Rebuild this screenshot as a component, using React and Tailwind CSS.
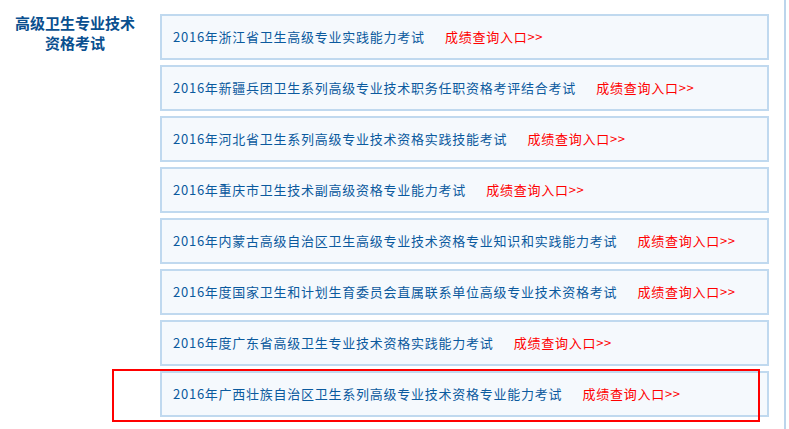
import React from "react";

const exams = [
  "2016年浙江省卫生高级专业实践能力考试",
  "2016年新疆兵团卫生系列高级专业技术职务任职资格考评结合考试",
  "2016年河北省卫生系列高级专业技术资格实践技能考试",
  "2016年重庆市卫生技术副高级资格专业能力考试",
  "2016年内蒙古高级自治区卫生高级专业技术资格专业知识和实践能力考试",
  "2016年度国家卫生和计划生育委员会直属联系单位高级专业技术资格考试",
  "2016年度广东省高级卫生专业技术资格实践能力考试",
  "2016年广西壮族自治区卫生系列高级专业技术资格专业能力考试",
];

const ExamRow = ({ title }) => (
  <div className="h-[46px] flex items-center pl-[11px] border-2 border-[#c0d9ef] bg-[#f5f9fd] tracking-[0.75px]">
    <span className="text-[#0b5a9e]">{title}</span>
    <a href="#" className="ml-[20px] text-[#ff0000]">
      成绩查询入口&gt;&gt;
    </a>
  </div>
);

export default function App() {
  return (
    <div
      className="relative flex w-[789px] h-[429px] bg-white text-[13px] leading-[16px]"
      style={{ fontFamily: '"Noto Sans CJK SC", "Noto Sans", sans-serif' }}
    >
      <div className="w-[150px] pt-[13px] text-center text-[15px] leading-[20px] font-bold text-[#0a4f8f]">
        高级卫生专业技术
        <br />
        资格考试
      </div>

      <div className="ml-[10px] w-[609px] pt-[14px] flex flex-col gap-[5px]">
        {exams.map((t) => (
          <ExamRow key={t} title={t} />
        ))}
      </div>

      <div className="ml-[15px] w-[2px] h-full bg-[#bcd5ec]" />

      <div className="absolute left-[112px] top-[369px] w-[648px] h-[53px] border-2 border-[#ff0000] pointer-events-none" />
    </div>
  );
}
